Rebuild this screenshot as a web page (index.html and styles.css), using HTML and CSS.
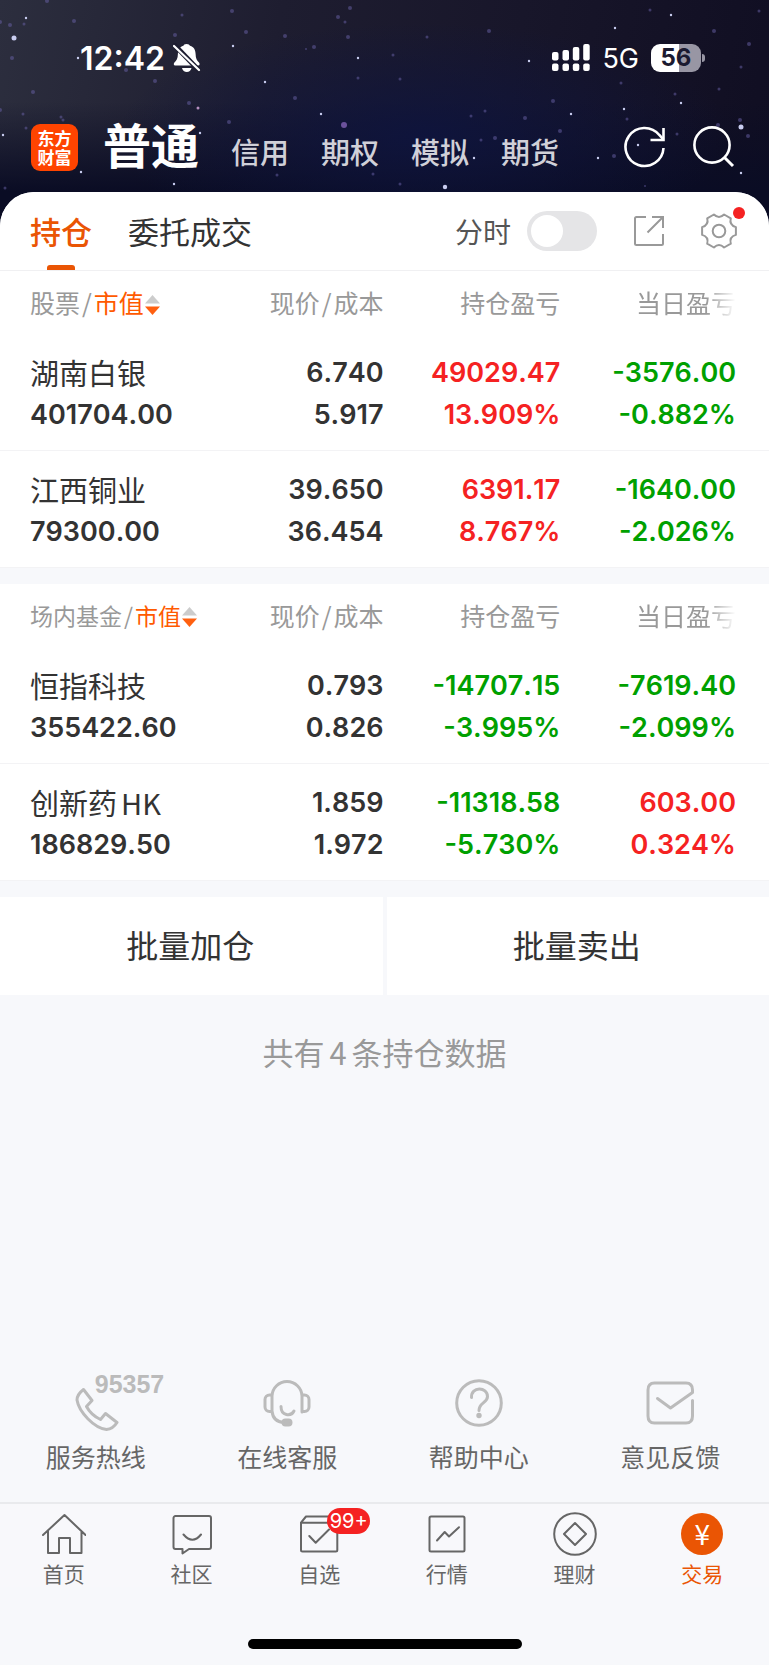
FILE: index.html
```html
<!DOCTYPE html>
<html lang="zh-CN">
<head>
    <meta charset="UTF-8">
    <meta name="viewport" content="width=device-width, initial-scale=1.0">
    <title>交易 - 持仓</title>
    <link rel="stylesheet" href="styles.css">
</head>
<body>
    <header class="header">
        <!-- 星空背景 -->
        <svg class="stars" viewBox="0 0 769 230" preserveAspectRatio="xMidYMin slice" aria-hidden="true">
            <g fill="#6a62a8" opacity="0.5">
                <circle cx="47" cy="1" r="2"/><circle cx="74" cy="21" r="2"/><circle cx="10" cy="25" r="2"/><circle cx="24" cy="24" r="1.5"/>
                <circle cx="0" cy="22" r="2"/><circle cx="12" cy="58" r="2"/><circle cx="33" cy="92" r="2"/><circle cx="0" cy="110" r="2"/>
                <circle cx="23" cy="114" r="1.5"/><circle cx="61" cy="117" r="1.5"/><circle cx="63" cy="120" r="1.5"/><circle cx="26" cy="128" r="1.5"/>
                <circle cx="126" cy="70" r="2"/><circle cx="155" cy="81" r="2"/><circle cx="189" cy="103" r="2"/><circle cx="175" cy="35" r="2"/>
                <circle cx="182" cy="15" r="1.5"/><circle cx="232" cy="11" r="2"/><circle cx="246" cy="32" r="2"/><circle cx="285" cy="36" r="2"/>
                <circle cx="314" cy="47" r="2"/><circle cx="306" cy="49" r="1"/><circle cx="295" cy="98" r="2"/><circle cx="338" cy="17" r="2"/>
                <circle cx="345" cy="22" r="1.5"/><circle cx="350" cy="8" r="2"/><circle cx="348" cy="37" r="2"/><circle cx="358" cy="78" r="1.5"/>
                <circle cx="229" cy="122" r="2"/><circle cx="427" cy="37" r="1.5"/><circle cx="489" cy="31" r="2"/><circle cx="400" cy="79" r="1.5"/>
                <circle cx="393" cy="55" r="1.5"/><circle cx="553" cy="101" r="2"/><circle cx="485" cy="111" r="1.5"/><circle cx="471" cy="116" r="1.5"/>
                <circle cx="525" cy="118" r="2"/><circle cx="560" cy="131" r="2"/><circle cx="481" cy="140" r="1.5"/><circle cx="495" cy="138" r="2"/>
                <circle cx="621" cy="83" r="1.5"/><circle cx="675" cy="94" r="1.5"/><circle cx="714" cy="31" r="2"/><circle cx="650" cy="10" r="1.5"/>
                <circle cx="749" cy="44" r="2"/><circle cx="719" cy="89" r="1.5"/><circle cx="741" cy="67" r="1.5"/><circle cx="627" cy="119" r="1.5"/>
                <circle cx="718" cy="125" r="2"/><circle cx="748" cy="136" r="2"/><circle cx="740" cy="120" r="2"/><circle cx="677" cy="134" r="1.5"/>
                <circle cx="614" cy="156" r="2"/><circle cx="400" cy="184" r="1.5"/><circle cx="645" cy="186" r="1"/><circle cx="5" cy="188" r="1.5"/>
                <circle cx="277" cy="175" r="1.5"/><circle cx="373" cy="174" r="1.5"/><circle cx="759" cy="11" r="1.5"/>
            </g>
            <circle cx="344" cy="125" r="3" fill="#6b529c"/>
            <circle cx="198" cy="108" r="1.5" fill="#b68fc0"/>
            <g fill="#c9cdf0">
                <circle cx="14" cy="38" r="2.5"/><circle cx="26" cy="18" r="1.2"/><circle cx="78" cy="58" r="1.2"/><circle cx="3" cy="135" r="1.2"/>
                <circle cx="81" cy="172" r="1.2"/><circle cx="174" cy="184" r="1.2"/><circle cx="200" cy="133" r="1.2"/><circle cx="233" cy="46" r="1.2"/>
                <circle cx="265" cy="82" r="1.2"/><circle cx="321" cy="114" r="1.2"/><circle cx="358" cy="58" r="1.2"/><circle cx="529" cy="61" r="1.2"/>
                <circle cx="571" cy="114" r="1.2"/><circle cx="615" cy="28" r="1.2"/><circle cx="671" cy="15" r="1.2"/><circle cx="681" cy="103" r="1.2"/>
                <circle cx="624" cy="109" r="1.2"/><circle cx="598" cy="158" r="1.2"/><circle cx="474" cy="158" r="1.2"/><circle cx="638" cy="145" r="1.2"/>
                <circle cx="741" cy="127" r="2.5"/><circle cx="741" cy="173" r="1.2"/><circle cx="445" cy="187" r="2.2"/><circle cx="518" cy="148" r="1.5"/>
            </g>
        </svg>

        <div class="status-bar">
            <span class="time">12:42</span>
            <svg class="bell" width="28" height="30" viewBox="0 0 28 30" aria-label="静音">
                <path fill="#fff" d="M13.500 1c-2 0-2.800 1-3.100 1.800-4 1.200-5.400 4.200-5.500 8.200-.1 4.500-1.400 6.500-3.500 8.600-1 1-.8 3 .8 3h23c1.600 0 1.800-2 .8-3-2.100-2.100-3.300-4.100-3.400-8.600-.1-4-1.600-7-5.600-8.200C16.600 2 15.500 1 13.500 1z"/>
                <path fill="#fff" d="M9 25h9.500c-.6 2.500-2.400 4-4.700 4S9.600 27.500 9 25z"/>
                <path d="M0 0.500L27 28.500" stroke="#1d1d30" stroke-width="5"/>
                <path d="M1 3L26 27" stroke="#fff" stroke-width="2.200" stroke-linecap="round"/>
            </svg>
            <svg class="signal" width="38" height="28" viewBox="0 0 38 28" fill="#fff" aria-label="信号">
                <rect x="0" y="8" width="6.500" height="8.500" rx="2"/><rect x="10.500" y="6" width="6.500" height="10.500" rx="2"/>
                <rect x="20.800" y="3" width="6.500" height="13.500" rx="2"/><rect x="31.200" y="0" width="6.500" height="16.500" rx="2"/>
                <rect x="0" y="19.500" width="6.500" height="7.500" rx="2"/><rect x="10.500" y="19.500" width="6.500" height="7.500" rx="2"/>
                <rect x="20.800" y="19.500" width="6.500" height="7.500" rx="2"/><rect x="31.200" y="19.500" width="6.500" height="7.500" rx="2"/>
            </svg>
            <span class="network">5G</span>
            <span class="battery">56</span>
        </div>

        <div class="top-nav">
            <a href="#" class="logo">东方<br>财富</a>
            <nav class="accounts">
                <a href="#" class="account active">普通</a>
                <a href="#" class="account">信用</a>
                <a href="#" class="account">期权</a>
                <a href="#" class="account">模拟</a>
                <a href="#" class="account">期货</a>
            </nav>
            <button type="button" class="icon-btn" aria-label="刷新">
                <svg width="44" height="44" viewBox="0 0 44 44" fill="none" stroke="#fff" stroke-width="2.600">
                    <path d="M40.500 23a19 19 0 1 1-4.200-13l4 4.300"/>
                    <path d="M40.500 3v12h-13"/>
                </svg>
            </button>
            <button type="button" class="icon-btn" aria-label="搜索">
                <svg width="44" height="44" viewBox="0 0 44 44" fill="none" stroke="#fff" stroke-width="2.600">
                    <circle cx="21" cy="20" r="17.600"/>
                    <path d="M33.500 32.500L42 41" stroke-width="3"/>
                </svg>
            </button>
        </div>
    </header>

    <main class="main">
        <div class="tabs">
            <a href="#" class="tab active">持仓</a>
            <a href="#" class="tab">委托成交</a>
            <label for="minute" class="switch-label">分时</label>
            <input type="checkbox" id="minute" class="switch">
            <button type="button" class="icon-btn share" aria-label="分享">
                <svg width="32" height="32" viewBox="0 0 32 32" fill="none" stroke="#999" stroke-width="2">
                    <path d="M13 2H3.500A1.500 1.500 0 0 0 2 3.500v25A1.500 1.500 0 0 0 3.500 30h25a1.500 1.500 0 0 0 1.500-1.500V19"/>
                    <path d="M19 2h11v11M30 2L14.500 17.500"/>
                </svg>
            </button>
            <button type="button" class="icon-btn settings" aria-label="设置">
                <svg width="36" height="36" viewBox="-18 -18 36 36" fill="none" stroke="#999" stroke-width="2" stroke-linejoin="round">
                    <path d="M16.900 3.900Q10 5.800 11.800 12.700L5.100 16.500Q0 11.500-5.100 16.500L-11.800 12.700Q-10 5.800-16.900 3.900V-3.900Q-10-5.800-11.800-12.700L-5.100-16.500Q0-11.500 5.100-16.500L11.800-12.700Q10-5.800 16.900-3.900Z"/>
                    <circle r="6.300"/>
                </svg>
                <span class="dot"></span>
            </button>
        </div>

        <table class="holdings">
            <thead>
                <tr>
                    <th>股票<span class="slash">/</span><span class="sort">市值</span><svg class="arrows" width="15" height="20" viewBox="0 0 15 20"><path fill="#ccc" d="M7.500 0L15 8.500H0z"/><path fill="#ff6010" d="M7.500 20L15 11.500H0z"/></svg></th>
                    <th>现价<span class="slash">/</span>成本</th>
                    <th>持仓盈亏</th>
                    <th><span class="fade">当日盈亏</span></th>
                </tr>
            </thead>
            <tbody>
                <tr>
                    <td><span class="name">湖南白银</span><span>401704.00</span></td>
                    <td><span>6.740</span><span>5.917</span></td>
                    <td class="up"><span>49029.47</span><span>13.909%</span></td>
                    <td class="down"><span>-3576.00</span><span>-0.882%</span></td>
                </tr>
                <tr>
                    <td><span class="name">江西铜业</span><span>79300.00</span></td>
                    <td><span>39.650</span><span>36.454</span></td>
                    <td class="up"><span>6391.17</span><span>8.767%</span></td>
                    <td class="down"><span>-1640.00</span><span>-2.026%</span></td>
                </tr>
            </tbody>
        </table>

        <table class="holdings funds">
            <thead>
                <tr>
                    <th>场内基金<span class="slash">/</span><span class="sort">市值</span><svg class="arrows" width="15" height="20" viewBox="0 0 15 20"><path fill="#ccc" d="M7.500 0L15 8.500H0z"/><path fill="#ff6010" d="M7.500 20L15 11.500H0z"/></svg></th>
                    <th>现价<span class="slash">/</span>成本</th>
                    <th>持仓盈亏</th>
                    <th><span class="fade">当日盈亏</span></th>
                </tr>
            </thead>
            <tbody>
                <tr>
                    <td><span class="name">恒指科技</span><span>355422.60</span></td>
                    <td><span>0.793</span><span>0.826</span></td>
                    <td class="down"><span>-14707.15</span><span>-3.995%</span></td>
                    <td class="down"><span>-7619.40</span><span>-2.099%</span></td>
                </tr>
                <tr>
                    <td><span class="name">创新药<span class="latin">HK</span></span><span>186829.50</span></td>
                    <td><span>1.859</span><span>1.972</span></td>
                    <td class="down"><span>-11318.58</span><span>-5.730%</span></td>
                    <td class="up"><span>603.00</span><span>0.324%</span></td>
                </tr>
            </tbody>
        </table>

        <div class="batch">
            <button type="button">批量加仓</button>
            <button type="button">批量卖出</button>
        </div>

        <p class="total">共有<span class="count">4</span>条持仓数据</p>

        <div class="services">
            <a href="#" class="service">
                <span class="service-icon">
                    <svg width="48" height="52" viewBox="0 0 48 52">
                        <path d="M11.500 10.500L20 21.500 14.500 27.500Q19 36 28.500 40.500L33.500 34.500 45 43.500Q41 50 34.500 50.500C22 49 7 33 5 21Q5 15.500 11.500 10.500Z"/>
                    </svg>
                    <span class="hotline">95357</span>
                </span>
                服务热线
            </a>
            <a href="#" class="service">
                <span class="service-icon">
                    <svg width="48" height="48" viewBox="0 0 48 48">
                        <path d="M9 33V17A15 15 0 0 1 24 2.500 15 15 0 0 1 39 17V33M9 16H6.500A4.500 4.500 0 0 0 2 20.500v7.500A4.500 4.500 0 0 0 6.500 32.500H9M39 16h2.500A4.500 4.500 0 0 1 46 20.500v7.500A4.500 4.500 0 0 1 41.500 32.500H39M9 32Q10 43 21 43.500M18 27.500C18 37 28 38 31 32"/>
                        <rect x="20" y="41" width="8" height="5" rx="2.500" fill="#bbb"/>
                    </svg>
                </span>
                在线客服
            </a>
            <a href="#" class="service">
                <span class="service-icon">
                    <svg width="48" height="48" viewBox="0 0 48 48">
                        <circle cx="24" cy="24" r="22.300"/>
                        <path d="M16.500 18.500C16 7 32.500 7.500 32.500 17.500C32.500 24 24 23.500 24 31.500"/>
                        <circle cx="24" cy="36.500" r="2.700" fill="#bbb" stroke="none"/>
                    </svg>
                </span>
                帮助中心
            </a>
            <a href="#" class="service">
                <span class="service-icon">
                    <svg width="48" height="48" viewBox="0 0 48 48">
                        <path d="M11.500 19.500L24.500 29 46.500 13.500V11Q46.500 4 40 4H8.500Q2 4 2 11V37Q2 44 8.500 44H40Q46.500 44 46.500 37V21.500"/>
                    </svg>
                </span>
                意见反馈
            </a>
        </div>
    </main>

    <nav class="bottom-nav">
        <a href="#" class="nav-item">
            <span class="nav-icon">
                <svg width="44" height="44" viewBox="0 0 44 44"><path d="M1 23L22.500 3 43.500 23M6 19V41H17V26H28V41H39.500V19"/></svg>
            </span>
            首页
        </a>
        <a href="#" class="nav-item">
            <span class="nav-icon">
                <svg width="44" height="44" viewBox="0 0 44 44"><path d="M5.500 4H39a2 2 0 0 1 2 2V35a2 2 0 0 1-2 2H19L12.500 41.500V37H5.500a2 2 0 0 1-2-2V6a2 2 0 0 1 2-2zM13.500 22.500Q22.500 33 31 22.500"/></svg>
            </span>
            社区
        </a>
        <a href="#" class="nav-item">
            <span class="nav-icon">
                <svg width="44" height="44" viewBox="0 0 44 44"><path d="M4 10.700H40.300V38a1.500 1.500 0 0 1-1.500 1.500H5.500A1.500 1.500 0 0 1 4 38zM4 10.700L9 4.500H35L40.300 10.700M12.300 24L18.700 30.700 32 17.500"/></svg>
                <span class="badge">99+</span>
            </span>
            自选
        </a>
        <a href="#" class="nav-item">
            <span class="nav-icon">
                <svg width="44" height="44" viewBox="0 0 44 44"><rect x="4.500" y="4.500" width="35" height="35" rx="1.500"/><path d="M12 28.500L19.700 20 24 24.500 34 15.300"/></svg>
            </span>
            行情
        </a>
        <a href="#" class="nav-item">
            <span class="nav-icon">
                <svg width="44" height="44" viewBox="0 0 44 44"><circle cx="22" cy="22" r="20.800"/><path d="M22 11L33 22 22 33 11 22z"/></svg>
            </span>
            理财
        </a>
        <a href="#" class="nav-item active">
            <span class="nav-icon"><span class="coin">¥</span></span>
            交易
        </a>
    </nav>
    <div class="home-indicator"></div>
</body>
</html>
```
FILE: styles.css
```css
* {
    margin: 0;
    padding: 0;
    box-sizing: border-box;
}

body {
    display: flex;
    flex-direction: column;
    min-height: 100vh;
    font-family: 'Noto Sans CJK SC', sans-serif;
    color: #333;
    background-color: #f7f8fb;
}

a {
    color: inherit;
    text-decoration: none;
}

button {
    font-family: inherit;
    color: inherit;
    background: none;
    border: none;
    cursor: pointer;
}

svg {
    display: block;
}

/* 顶部 */
.header {
    position: relative;
    padding: 36px 34px 34px 31px;
    margin-bottom: -34px;
    color: #fff;
    background:
        radial-gradient(ellipse 40% 50% at 55% 60%, rgba(14, 20, 62, 0.9), transparent),
        linear-gradient(180deg, transparent 45%, #0a0c24 85%),
        linear-gradient(100deg, #2c2e3e 0%, #1e1d30 35%, #18162a 65%, #100e22 100%);
}

.stars {
    position: absolute;
    top: 0;
    left: 0;
    width: 100%;
    height: 100%;
}

.status-bar {
    position: relative;
    display: flex;
    align-items: center;
    height: 44px;
    padding: 0 34px 0 49px;
    font-family: Inter, sans-serif;
}

.time {
    font-size: 32px;
    font-weight: 600;
}

.bell {
    margin-left: 8px;
}

.signal {
    margin-left: auto;
}

.network {
    margin: 0 12px;
    font-size: 27px;
}

.battery {
    position: relative;
    width: 50px;
    border-radius: 9px;
    font-size: 24px;
    font-weight: 700;
    line-height: 28px;
    text-align: center;
    color: #1b1a30;
    background: linear-gradient(90deg, #fff 56%, #9896a4 56%);
}

.battery::after {
    content: '';
    position: absolute;
    top: 10px;
    right: -4px;
    width: 3px;
    height: 8px;
    border-radius: 0 3px 3px 0;
    background-color: #9896a4;
}

.top-nav {
    position: relative;
    display: flex;
    align-items: center;
    height: 90px;
    margin-top: 22px;
}

.logo {
    width: 47px;
    height: 47px;
    padding-top: 4px;
    border-radius: 9px;
    font-size: 17px;
    font-weight: 700;
    line-height: 19px;
    text-align: center;
    background-color: #ff4400;
}

.accounts {
    display: flex;
    align-items: baseline;
    flex: 1;
    gap: 32px;
    margin-left: 25px;
    padding-bottom: 8px;
}

.account {
    font-size: 29px;
    font-weight: 500;
    color: #d0d0d8;
}

.account.active {
    font-size: 48px;
    line-height: 60px;
    font-weight: 700;
    color: #fff;
}

.icon-btn {
    position: relative;
    margin-left: 24px;
}

/* 持仓 */
.main {
    position: relative;
    display: flex;
    flex: 1;
    flex-direction: column;
    border-radius: 34px 34px 0 0;
    background-color: #f7f8fb;
    overflow: hidden;
}

.tabs {
    display: flex;
    align-items: center;
    height: 79px;
    padding: 0 32px 0 30px;
    border-bottom: 1px solid #f0f0f2;
    background-color: #fff;
}

.tab {
    position: relative;
    margin-right: 36px;
    font-size: 31px;
    line-height: 78px;
}

.tab.active {
    font-weight: 500;
    color: #ea5504;
}

.tab.active::after {
    content: '';
    position: absolute;
    left: 17px;
    bottom: 0;
    width: 28px;
    height: 5px;
    border-radius: 3px 3px 0 0;
    background-color: #ea5504;
}

.switch-label {
    margin-left: auto;
    font-size: 28px;
    color: #555;
}

.switch {
    appearance: none;
    width: 70px;
    height: 40px;
    margin-left: 16px;
    padding: 4px;
    border-radius: 20px;
    background-color: #e5e5e7;
}

.switch::before {
    content: '';
    display: block;
    width: 32px;
    height: 32px;
    border-radius: 50%;
    background-color: #fff;
}

.switch:checked::before {
    margin-left: 30px;
}

.share,
.settings {
    margin-left: 36px;
}

.dot {
    position: absolute;
    top: -6px;
    right: -8px;
    width: 12px;
    height: 12px;
    border-radius: 50%;
    background-color: #f52222;
}

.holdings {
    width: 100%;
    margin-bottom: 16px;
    table-layout: fixed;
    border-collapse: collapse;
    background-color: #fff;
}

.holdings th {
    width: 23%;
    height: 63px;
    padding: 0 1px 2px 0;
    font-size: 25px;
    font-weight: 400;
    line-height: 36px;
    text-align: right;
    white-space: nowrap;
    color: #999;
}

.holdings td {
    padding: 18px 1px 14px 0;
    border-bottom: 1px solid #f3f3f5;
    font-family: Inter, sans-serif;
    font-size: 27px;
    font-weight: 600;
    font-kerning: none;
    line-height: 42px;
    text-align: right;
}

.holdings th:first-child,
.holdings td:first-child {
    width: 27%;
    padding-left: 30px;
    text-align: left;
}

.holdings th:last-child,
.holdings td:last-child {
    width: 27%;
    padding-right: 33px;
}

.holdings td > span {
    display: block;
}

.holdings td > .name {
    padding-bottom: 2px;
    font-family: 'Noto Sans CJK SC', sans-serif;
    font-size: 29px;
    font-weight: 400;
    line-height: 40px;
}

.holdings .up {
    color: #f52222;
}

.holdings .down {
    color: #00a000;
}

.funds th:first-child {
    font-size: 23px;
}

.slash {
    margin: 0 2px;
}

.sort {
    color: #ff5a00;
}

.arrows {
    display: inline-block;
    margin-left: 1px;
    vertical-align: -2px;
}

.fade {
    -webkit-mask-image: linear-gradient(90deg, #000 70%, transparent);
    mask-image: linear-gradient(90deg, #000 70%, transparent);
}

.latin {
    margin-left: 4px;
}

.batch {
    display: flex;
    gap: 4px;
}

.batch button {
    flex: 1;
    height: 98px;
    padding: 0 2px 4px 0;
    font-size: 32px;
    background-color: #fff;
}

.total {
    margin-top: 34px;
    font-size: 31px;
    line-height: 46px;
    text-align: center;
    color: #999;
}

.count {
    margin: 0 5px;
}

.services {
    display: flex;
    margin-top: auto;
    padding: 24px 3px 29px 0;
}

.service {
    display: flex;
    flex: 1;
    flex-direction: column;
    align-items: center;
    gap: 12px;
    font-size: 25px;
    line-height: 34px;
    color: #666;
}

.service-icon {
    position: relative;
    height: 48px;
}

.service-icon svg {
    fill: none;
    stroke: #bbb;
    stroke-width: 3;
    stroke-linecap: round;
    stroke-linejoin: round;
}

.hotline {
    position: absolute;
    top: -8px;
    left: 23px;
    font-family: 'Liberation Sans', sans-serif;
    font-size: 25px;
    font-weight: 700;
    line-height: 26px;
    color: #bbb;
}

/* 底部导航 */
.bottom-nav {
    display: flex;
    padding: 8px 3px 0 0;
    border-top: 2px solid #e9eaed;
    background-color: #f8f8fb;
}

.nav-item {
    display: flex;
    flex: 1;
    flex-direction: column;
    align-items: center;
    gap: 3px;
    font-size: 21px;
    line-height: 28px;
    color: #666;
}

.nav-item.active {
    color: #ea5504;
}

.nav-icon {
    position: relative;
    display: flex;
    align-items: center;
    justify-content: center;
    width: 44px;
    height: 44px;
}

.nav-icon svg {
    fill: none;
    stroke: #666;
    stroke-width: 2;
    stroke-linejoin: round;
    stroke-linecap: round;
}

.badge {
    position: absolute;
    top: -4px;
    left: 30px;
    width: 43px;
    border-radius: 13px;
    font-family: Inter, sans-serif;
    font-size: 20px;
    line-height: 26px;
    text-align: center;
    color: #fff;
    background-color: #f52222;
}

.coin {
    width: 42px;
    height: 42px;
    border-radius: 50%;
    font-size: 28px;
    line-height: 40px;
    text-align: center;
    color: #fff;
    background-color: #ea5504;
}

.home-indicator {
    width: 274px;
    height: 10px;
    margin: 52px auto 16px;
    border-radius: 5px;
    background-color: #000;
}
```
